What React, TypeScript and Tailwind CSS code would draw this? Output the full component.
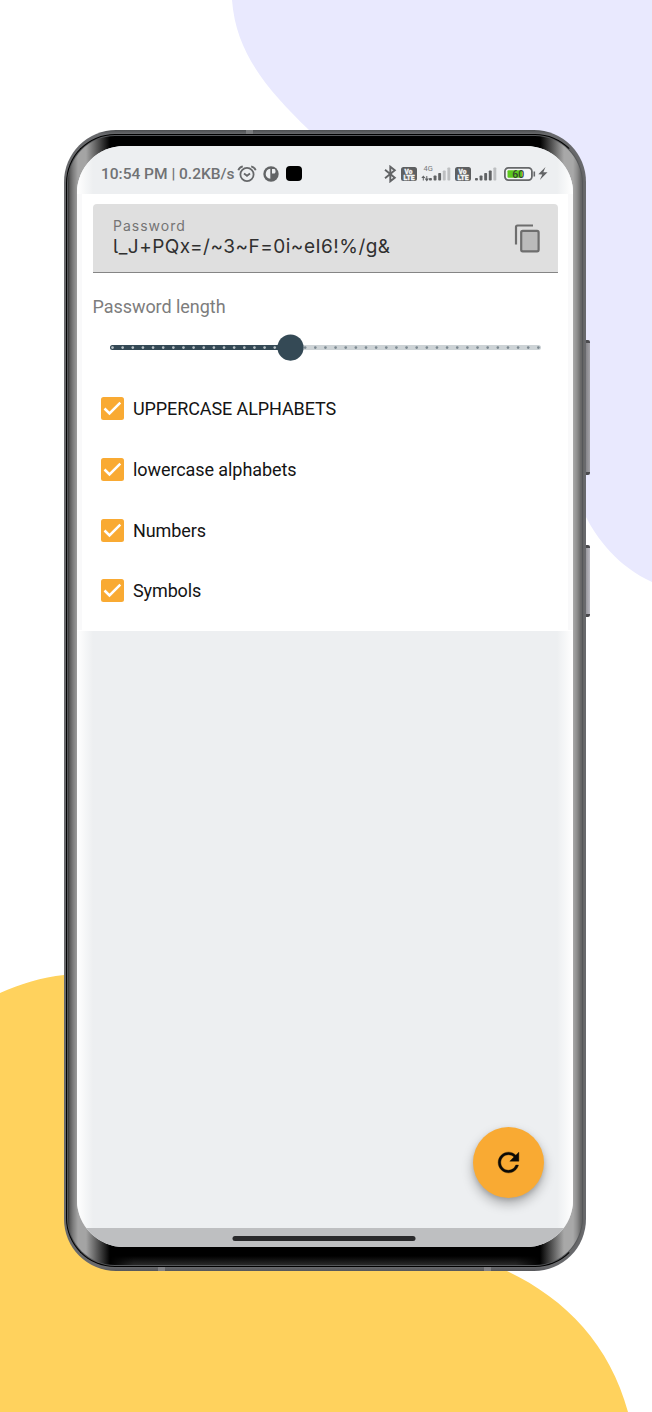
import React from "react";

const ROBOTO = "font-['Roboto',sans-serif]";

function Backdrop() {
  return (
    <svg className="absolute inset-0" width="652" height="1412" viewBox="0 0 652 1412" aria-hidden="true">
      <path
        d="M232 0C236 54 268 90 309 130C420 220 530 260 556 420C570 500 596 556 652 582V0Z"
        fill="#e9e9fe"
      />
      <path
        d="M0 993C20 984 42 977 64 975C180 966 240 1060 300 1150C360 1230 440 1245 507 1271C566 1299 610 1345 628 1412H0Z"
        fill="#ffd25d"
      />
    </svg>
  );
}

function AlarmIcon() {
  return (
    <svg width="20" height="18" viewBox="0 0 20 18" fill="none" stroke="#66686a" strokeWidth="1.8">
      <circle cx="10" cy="9.5" r="6.6" />
      <path d="M7 8.500l3 2.300 3-2.300M1.300 5.200C2 3.200 3.600 1.800 5.800 1.300M18.700 5.200C18 3.200 16.400 1.800 14.200 1.300" />
    </svg>
  );
}

function PIcon() {
  return (
    <svg width="16" height="16" viewBox="0 0 16 16">
      <circle cx="8" cy="8" r="7.7" fill="#626466" />
      <path d="M7.300 2.700V12.800Q3 12.300 2.700 8Q3 3.300 7.300 2.700Z" fill="#edeff1" />
      <path d="M9 3H11.500Q12.500 3.200 12.500 5.300T11.500 7.600H9Z" fill="#edeff1" />
    </svg>
  );
}

function BluetoothIcon() {
  return (
    <svg width="13" height="18" viewBox="0 0 13 18" fill="none" stroke="#626466" strokeWidth="1.9">
      <path d="M1 4.800L10.800 12.700L6.300 16.300V1.700L10.800 5.300L1 13.200" />
    </svg>
  );
}

function VolteIcon() {
  return (
    <svg width="16" height="14" viewBox="0 0 16 14">
      <rect width="16" height="14" rx="2.500" fill="#5d5f61" />
      <g fill="#f3f4f5" stroke="#f3f4f5" strokeWidth="0.300" fontFamily="Roboto" fontWeight="900" textAnchor="middle">
        <text x="7.500" y="6.500" fontSize="6.500">Vo</text>
        <text x="8" y="12.500" fontSize="6.800">LTE</text>
      </g>
    </svg>
  );
}

function SignalBars({ lit }: { lit: number }) {
  return (
    <svg width="22" height="14" viewBox="0 0 22 14">
      {[0, 1, 2, 3, 4].map((i) => (
        <rect
          key={i}
          x={i * 4.600}
          y={[11, 8.500, 6, 3.500, 0.500][i]}
          width="2.900"
          height={[2.500, 5, 7.500, 10, 13][i]}
          rx="0.800"
          fill={i < lit ? "#606264" : "#bdbfc1"}
        />
      ))}
    </svg>
  );
}

function StatusBar() {
  return (
    <div className="flex h-12 items-center bg-[#edeff1] pl-6 pt-[7px]">
      <span className={`w-[136px] whitespace-nowrap text-[15.500px] leading-[20px] tracking-[-0.01px] text-[#707274] ${ROBOTO} pt-px font-medium`}>
        10:54 PM | 0.2KB/s
      </span>
      <span><AlarmIcon /></span>
      <span className="ml-[6px]"><PIcon /></span>
      <span className="ml-[7px] h-[15px] w-[15.500px] rounded-[4px] bg-black" />
      <span className="ml-[82px]"><BluetoothIcon /></span>
      <span className="ml-[4px]"><VolteIcon /></span>
      <svg className="ml-[4px]" width="9" height="18" viewBox="0 0 9 18">
        <path d="M2.300 10.500L4.500 13H0.300ZM5.800 16.500L3.600 13.500H8Z" fill="#606264" />
        <path d="M1.800 12v3.500H2.800V12ZM5.300 11v3h1V11Z" fill="#606264" />
      </svg>
      <span className="relative -ml-[1px]">
        <span className={`absolute -left-[5px] -top-[2px] text-[7.500px] leading-[8px] text-[#77797b] ${ROBOTO}`}>4G</span>
        <SignalBars lit={3} />
      </span>
      <span className="ml-[4px]"><VolteIcon /></span>
      <span className="ml-[4px]"><SignalBars lit={4} /></span>
      <svg className="ml-[7px]" width="32" height="14" viewBox="0 0 32 14">
        <rect x="0.900" y="0.900" width="27" height="12.200" rx="3.500" fill="#f4f5f6" stroke="#66686a" strokeWidth="1.800" />
        <rect x="3.500" y="3.300" width="14.500" height="7.400" rx="1" fill="#5cc81e" />
        <path d="M30.300 4.500v5" stroke="#66686a" strokeWidth="1.600" />
        <text x="14.300" y="10.700" textAnchor="middle" fontFamily="Roboto" fontSize="10.500" fontWeight="500" fill="#35452f">60</text>
      </svg>
      <svg className="ml-[2.500px]" width="10" height="13" viewBox="0 0 10 13">
        <path d="M7.500 0L0.300 7.300L4.300 7.400L1.800 13L9.500 5.300L5.300 5.200Z" fill="#626466" />
      </svg>
    </div>
  );
}

function PasswordField() {
  return (
    <div className="flex h-[69px] rounded-t-[4px] border-b border-[#858585] bg-[#dfdfdf] pl-[20.500px] pr-[18.500px]">
      <div className="flex-1 pt-[13px] font-['Inter',sans-serif]">
        <div className="text-[14px] leading-[17px] tracking-[1px] text-[#747474]">Password</div>
        <div className="whitespace-nowrap pt-px text-[19px] leading-[24px] tracking-[0.480px] text-[#303030] [font-feature-settings:'cv05']">
          l_J+PQx=/~3~F=0i~eI6!%/g&amp;
        </div>
      </div>
      <svg className="mt-[19px]" width="26" height="30" viewBox="0 0 26 30" fill="none" stroke="#6e6e6e" strokeWidth="2.200">
        <path d="M2 21.500V4Q2 2.500 3.500 2.500H19" />
        <rect x="7.200" y="7.900" width="17.400" height="20.400" rx="1.500" fill="#bbbbbb" />
      </svg>
    </div>
  );
}

function LengthSlider() {
  const ticks = Array.from({ length: 43 }, (_, i) => 2.500 + i * 10.140);
  return (
    <svg className="ml-[17px] mt-[16px]" width="432" height="28" viewBox="0 0 432 28">
      <rect x="0" y="11.100" width="431" height="5" rx="2.500" fill="#cdd3d6" />
      <rect x="0" y="11.100" width="180" height="5" rx="2.500" fill="#344955" />
      {ticks.map((x) => (
        <circle key={x} cx={x} cy="13.600" r="1.300" fill={x < 180 ? "#bcc4c8" : "#7b8890"} />
      ))}
      <circle cx="180.500" cy="13.600" r="13.100" fill="#344955" />
    </svg>
  );
}

function Option({ label, tracking }: { label: string; tracking: string }) {
  return (
    <label className="flex h-[60.700px] items-center">
      <span className="flex size-[23px] items-center justify-center rounded-[2.500px] bg-[#f9aa33]">
        <svg width="19" height="15" viewBox="0 0 19 15" fill="none" stroke="#fff" strokeWidth="2.500">
          <path d="M1.500 7.500L6.500 12.500L17.300 1.700" />
        </svg>
      </span>
      <span className={`ml-[9px] whitespace-nowrap text-[18px] text-[#141414] ${tracking} ${ROBOTO}`}>{label}</span>
    </label>
  );
}

function Screen() {
  return (
    <div className="relative flex h-[1101px] w-[496px] flex-col overflow-hidden rounded-[47px] bg-[#edeff1]">
      <StatusBar />
      <div className="h-[436.500px] bg-white pl-[15.500px] pr-[15px] pt-[10px]">
        <PasswordField />
        <div className={`mt-[22px] text-[18px] leading-[23px] tracking-[-0.050px] text-[#7d7d7d] ${ROBOTO}`}>Password length</div>
        <LengthSlider />
        <div className="mt-[16.300px] pl-[8.500px]">
          <Option label="UPPERCASE ALPHABETS" tracking="tracking-[-0.1px]" />
          <Option label="lowercase alphabets" tracking="tracking-[-0.080px]" />
          <Option label="Numbers" tracking="tracking-[-0.080px]" />
          <Option label="Symbols" tracking="tracking-[-0.120px]" />
        </div>
      </div>
      <div className="flex flex-1 items-end justify-end pb-[30px] pr-[29.500px]">
        <button
          className="flex size-[71px] items-center justify-center rounded-full bg-[#f9aa33] shadow-[0_6px_12px_rgba(0,0,0,0.28),0_2px_4px_rgba(0,0,0,0.12)]"
          aria-label="Regenerate"
        >
          <svg width="31" height="31" viewBox="0 0 24 24" fill="#0c0a06" stroke="#0c0a06" strokeWidth="0.300">
            <path d="M17.650 6.350C16.200 4.900 14.210 4 12 4c-4.420 0-7.990 3.580-7.990 8s3.570 8 7.990 8c3.730 0 6.840-2.550 7.730-6h-2.080c-.820 2.330-3.040 4-5.650 4-3.310 0-6-2.690-6-6s2.690-6 6-6c1.660 0 3.140.690 4.220 1.780L13 11h7V4l-2.350 2.350z" />
          </svg>
        </button>
      </div>
      <div className="flex h-[19px] justify-center bg-[#bebfc1] pt-[8px]">
        <div className="h-[4.500px] w-[183px] -translate-x-[1.500px] rounded-full bg-[#29292b]" />
      </div>
      <div className="pointer-events-none absolute bottom-[19px] left-0 top-0 w-4 bg-linear-to-r from-white to-transparent" />
      <div className="pointer-events-none absolute bottom-[19px] right-0 top-0 w-4 bg-linear-to-l from-white to-transparent" />
      <div className="pointer-events-none absolute left-0 top-12 h-[436px] w-[5px] bg-[#f9f9fa]" />
      <div className="pointer-events-none absolute right-0 top-12 h-[436px] w-[5px] bg-[#f9f9fa]" />
    </div>
  );
}

function Phone() {
  return (
    <div className="relative ml-16 h-[1141px] w-[522px]">
      <div className="absolute left-[520px] top-[210px] h-[135px] w-[5.500px] rounded-r-[2px] border-y-[3px] border-[#4b4b4e] bg-linear-to-r from-[#77777b] to-[#a3a2a8]" />
      <div className="absolute left-[520px] top-[415px] h-[72px] w-[5.500px] rounded-r-[2px] border-y-[3px] border-[#4b4b4e] bg-linear-to-r from-[#88888c] to-[#bcbbc3]" />
      <div className="relative h-full rounded-[52px] bg-[linear-gradient(180deg,#4c4e50,#68696c_4px,#68696c_1137px,#55565a)] px-[2px] pb-[4px] pt-[4px]">
        <div className="h-full rounded-[49px] border border-r-[#666] border-black bg-[#55575a] p-px">
          <div className="h-full rounded-[47px] bg-[linear-gradient(90deg,#333,#5c5c5c_2px,#7c7c7c_5px,#a4a4a4_10px,#a4a4a4_18px,#000_42px,#000_472px,#a8a8a8_496px,#a8a8a8_505px,#8e8e8e_509px,#666_513px,#666)] pl-[9px] pt-[10px]">
            <Screen />
          </div>
        </div>
      </div>
      <div className="absolute bottom-[6px] left-[46px] h-[9px] w-[430px] bg-linear-to-b from-transparent to-[#2a2a2a] [mask-image:linear-gradient(90deg,transparent,#000_24px,#000_406px,transparent)]" />
      <div className="absolute left-[182px] top-0 h-[4px] w-[7px] bg-[#7b7c7e]" />
      <div className="absolute bottom-0 left-[94px] h-[4px] w-[7px] bg-[#818185]" />
      <div className="absolute bottom-0 left-[420px] h-[4px] w-[7px] bg-[#818185]" />
    </div>
  );
}

export default function App() {
  return (
    <main className="relative h-[1412px] w-[652px] overflow-hidden bg-white pt-[130px]">
      <Backdrop />
      <Phone />
    </main>
  );
}
